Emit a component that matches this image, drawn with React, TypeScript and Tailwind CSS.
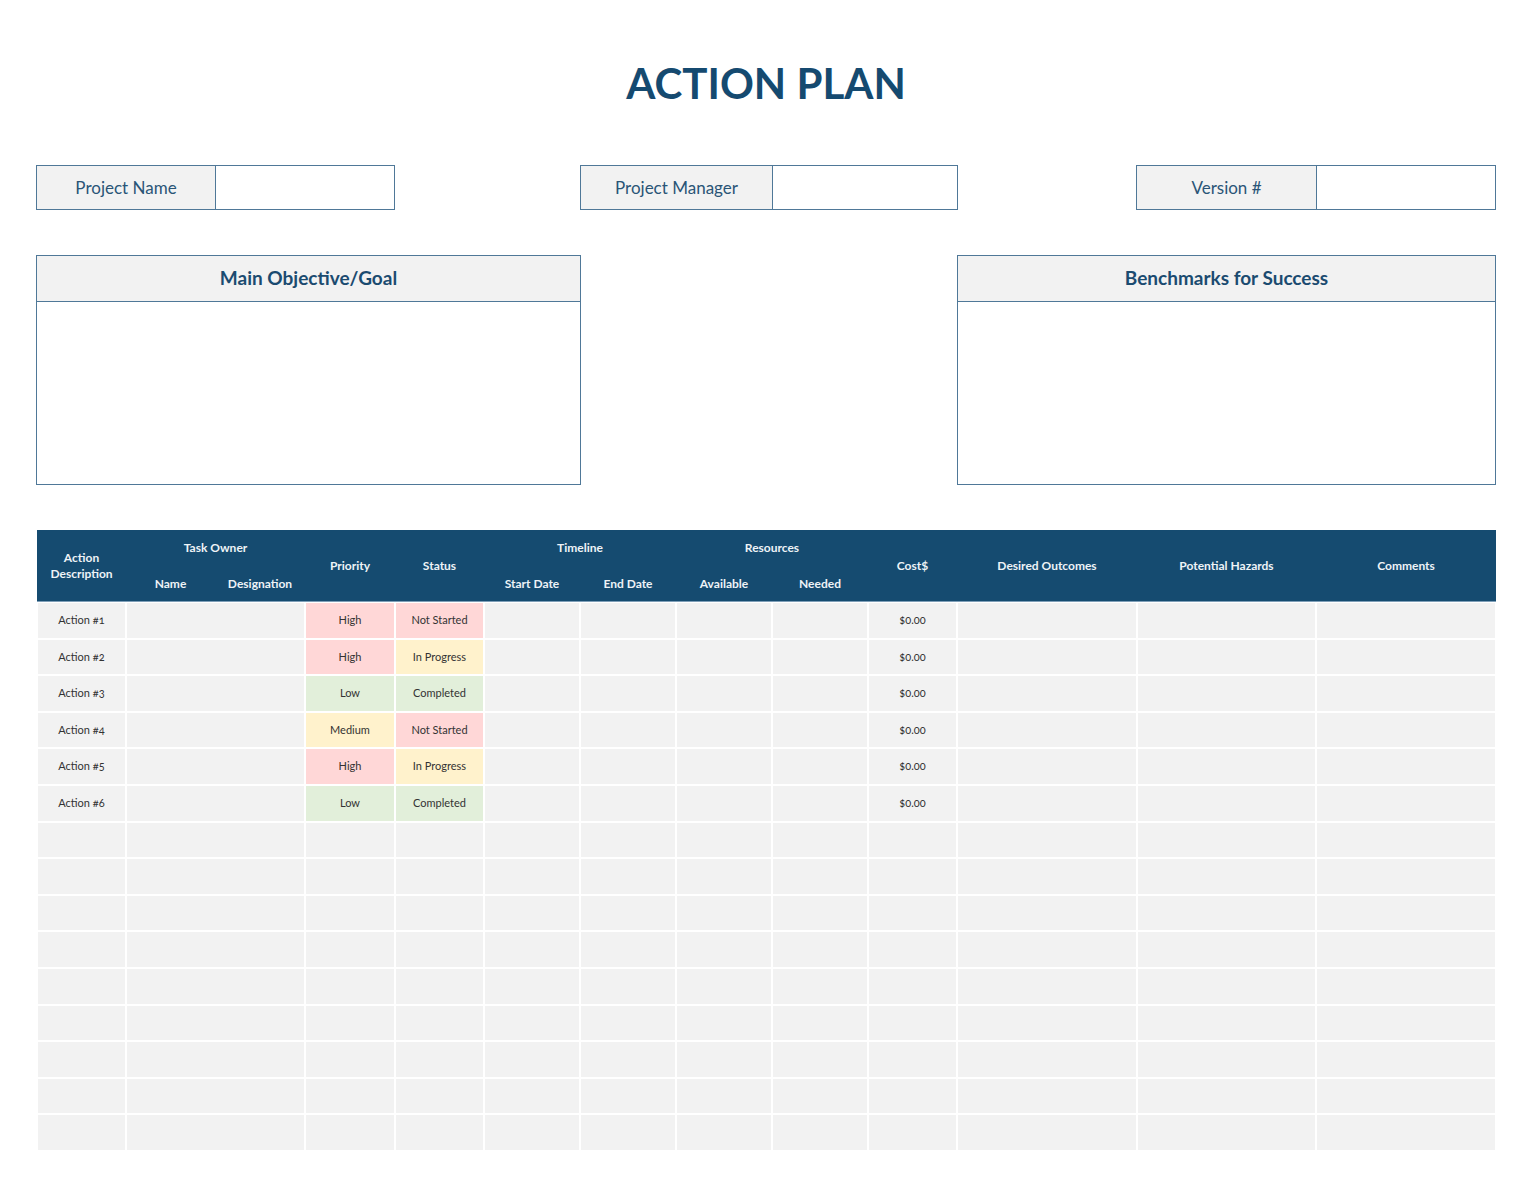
import React from "react";

const font = { fontFamily: "Lato, 'Open Sans', sans-serif" };

const cols =
  "grid grid-cols-[89px_89px_90px_90px_89px_96px_96px_96px_96px_89px_180px_179px_180px]";

type Row = { action?: string; priority?: string; status?: string; cost?: string };

const rows: Row[] = [
  { action: "Action #1", priority: "High", status: "Not Started", cost: "$0.00" },
  { action: "Action #2", priority: "High", status: "In Progress", cost: "$0.00" },
  { action: "Action #3", priority: "Low", status: "Completed", cost: "$0.00" },
  { action: "Action #4", priority: "Medium", status: "Not Started", cost: "$0.00" },
  { action: "Action #5", priority: "High", status: "In Progress", cost: "$0.00" },
  { action: "Action #6", priority: "Low", status: "Completed", cost: "$0.00" },
  {}, {}, {}, {}, {}, {}, {}, {}, {},
];

const tone: Record<string, string> = {
  High: "bg-[#ffd7d7]",
  Medium: "bg-[#fff2cc]",
  Low: "bg-[#e2efda]",
  "Not Started": "bg-[#ffd7d7]",
  "In Progress": "bg-[#fff2cc]",
  Completed: "bg-[#e2efda]",
};

function Field({ label, labelW, valueW }: { label: string; labelW: string; valueW: string }) {
  return (
    <div className="flex h-[45px] border border-[#4f7898]">
      <div className={`${labelW} flex items-center justify-center bg-[#f2f2f2] border-r border-[#4f7898] text-[17px] text-[#2a5577]`}>
        {label}
      </div>
      <div className={`${valueW} bg-white`} />
    </div>
  );
}

function Box({ title, w }: { title: string; w: string }) {
  return (
    <div className={`${w} h-[230px] border border-[#4f7898] flex flex-col`}>
      <div className="h-[46px] flex items-center justify-center bg-[#f2f2f2] border-b border-[#4f7898] text-[19px] font-bold text-[#1b4b70]">
        {title}
      </div>
      <div className="flex-1 bg-white" />
    </div>
  );
}

function Cell({ children, className = "" }: { children?: React.ReactNode; className?: string }) {
  return (
    <div className={`border border-white flex items-center justify-center text-[11px] text-[#333] [font-variant-numeric:oldstyle-nums] ${className || "bg-[#f2f2f2]"}`}>
      {children}
    </div>
  );
}

export default function App() {
  return (
    <div className="min-h-[1187px] bg-white pl-[36px] pr-[40px]" style={font}>
      {/* Title */}
      <div className="h-[165px] pt-[55px] text-center">
        <h1 className="text-[42px] font-bold leading-[56px] text-[#154a70]">ACTION PLAN</h1>
      </div>

      {/* Top fields */}
      <div className="flex">
        <Field label="Project Name" labelW="w-[179px]" valueW="w-[178px]" />
        <div className="ml-[185px]">
          <Field label="Project Manager" labelW="w-[192px]" valueW="w-[184px]" />
        </div>
        <div className="ml-auto">
          <Field label="Version #" labelW="w-[180px]" valueW="w-[178px]" />
        </div>
      </div>

      {/* Objective boxes */}
      <div className="flex justify-between mt-[45px]">
        <Box title="Main Objective/Goal" w="w-[545px]" />
        <Box title="Benchmarks for Success" w="w-[539px]" />
      </div>

      {/* Table */}
      <div className="mt-[45px] ml-px w-[1459px]">
        <div className={`${cols} grid-rows-[36px_36px] h-[72px] bg-[#154b70] text-[12px] font-bold text-[#eef3f7] border-b border-[#7f9fb8]`}>
          <div className="row-span-2 col-start-1 flex items-center justify-center text-center leading-[16px]">
            Action<br />Description
          </div>
          <div className="col-span-2 col-start-2 row-start-1 flex items-center justify-center">Task Owner</div>
          <div className="col-start-2 row-start-2 flex items-center justify-center">Name</div>
          <div className="col-start-3 row-start-2 flex items-center justify-center">Designation</div>
          <div className="col-start-4 row-start-1 row-span-2 flex items-center justify-center">Priority</div>
          <div className="col-start-5 row-start-1 row-span-2 flex items-center justify-center">Status</div>
          <div className="col-span-2 col-start-6 row-start-1 flex items-center justify-center">Timeline</div>
          <div className="col-start-6 row-start-2 flex items-center justify-center">Start Date</div>
          <div className="col-start-7 row-start-2 flex items-center justify-center">End Date</div>
          <div className="col-span-2 col-start-8 row-start-1 flex items-center justify-center">Resources</div>
          <div className="col-start-8 row-start-2 flex items-center justify-center">Available</div>
          <div className="col-start-9 row-start-2 flex items-center justify-center">Needed</div>
          <div className="col-start-10 row-start-1 row-span-2 flex items-center justify-center">Cost$</div>
          <div className="col-start-11 row-start-1 row-span-2 flex items-center justify-center">Desired Outcomes</div>
          <div className="col-start-12 row-start-1 row-span-2 flex items-center justify-center">Potential Hazards</div>
          <div className="col-start-13 row-start-1 row-span-2 flex items-center justify-center">Comments</div>
        </div>

        {rows.map((r, i) => (
          <div key={i} className={`${cols} h-[36.6px]`}>
            <Cell>{r.action}</Cell>
            <Cell className="col-span-2 bg-[#f2f2f2]" />
            <Cell className={r.priority ? tone[r.priority] : ""}>{r.priority}</Cell>
            <Cell className={r.status ? tone[r.status] : ""}>{r.status}</Cell>
            <Cell />
            <Cell />
            <Cell />
            <Cell />
            <Cell className="bg-[#f2f2f2] text-[9px]">{r.cost}</Cell>
            <Cell />
            <Cell />
            <Cell />
          </div>
        ))}
      </div>
    </div>
  );
}
